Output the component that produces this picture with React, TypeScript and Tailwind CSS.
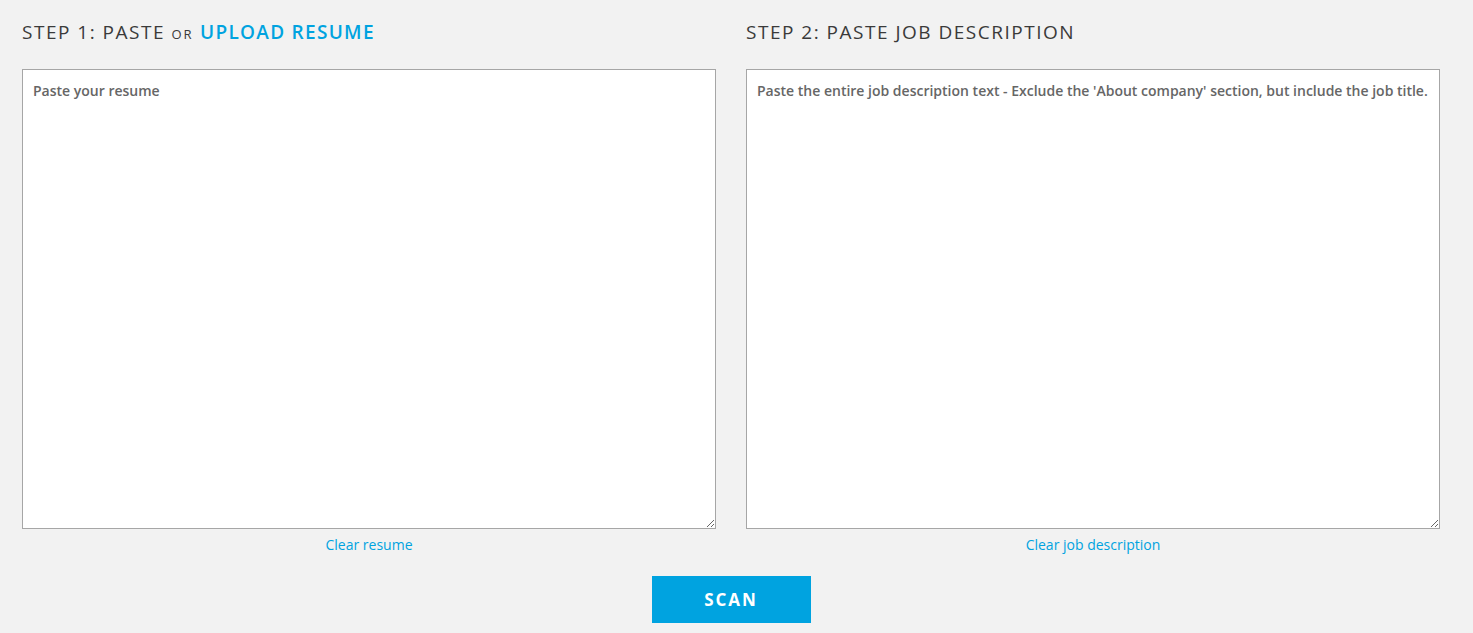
export default function App() {
  return (
    <div className="min-h-screen bg-[#f2f2f2] font-['Open_Sans',sans-serif] pl-[22px] pr-[33px] pt-[20px]">
      <div className="grid grid-cols-2 gap-[30px]">
        <div className="flex flex-col">
          <h2 className="h-[24px] leading-[24px] text-[19px] tracking-[1.5px] text-[#3a3a3a] mb-[25px] whitespace-nowrap">
            STEP 1: PASTE <span className="text-[13px] tracking-[2px]">OR</span>{' '}
            <a href="#" className="text-[#00a3e0] font-semibold tracking-[1.3px]">UPLOAD RESUME</a>
          </h2>
          <textarea
            placeholder="Paste your resume"
            className="h-[460px] w-full bg-white border border-[#a6a6a6] px-[10px] pt-[10px] text-[14px] font-semibold text-[#333] placeholder:text-[#666] outline-none"
          />
          <a href="#" className="mt-[6px] text-center text-[14px] leading-[20px] text-[#00a3e0]">Clear resume</a>
        </div>
        <div className="flex flex-col">
          <h2 className="h-[24px] leading-[24px] text-[19px] tracking-[1.5px] text-[#3a3a3a] mb-[25px] whitespace-nowrap">
            STEP 2: PASTE JOB DESCRIPTION
          </h2>
          <textarea
            placeholder="Paste the entire job description text - Exclude the 'About company' section, but include the job title."
            className="h-[460px] w-full bg-white border border-[#a6a6a6] px-[10px] pt-[10px] text-[14px] font-semibold text-[#333] placeholder:text-[#666] outline-none"
          />
          <a href="#" className="mt-[6px] text-center text-[14px] leading-[20px] text-[#00a3e0]">Clear job description</a>
        </div>
      </div>
      <div className="flex justify-center mt-[21px]">
        <button className="w-[159px] h-[47px] bg-[#00a3e0] text-white font-bold text-[17px] tracking-[2px]">SCAN</button>
      </div>
    </div>
  )
}
